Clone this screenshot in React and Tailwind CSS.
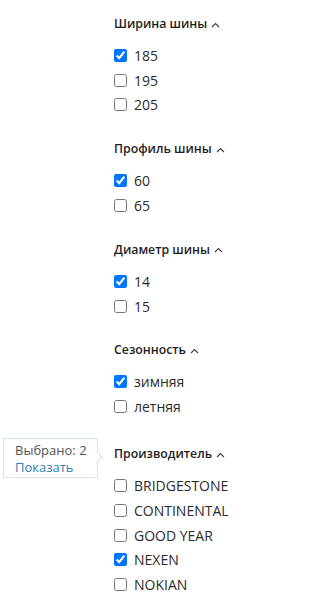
import React from 'react';

const groups = [
  { title: 'Ширина шины', items: [['185', true], ['195', false], ['205', false]] },
  { title: 'Профиль шины', items: [['60', true], ['65', false]] },
  { title: 'Диаметр шины', items: [['14', true], ['15', false]] },
  { title: 'Сезонность', items: [['зимняя', true], ['летняя', false]] },
  {
    title: 'Производитель',
    tip: true,
    items: [['BRIDGESTONE', false], ['CONTINENTAL', false], ['GOOD YEAR', false], ['NEXEN', true], ['NOKIAN', false]],
  },
];

const Chevron = () => (
  <svg width="9" height="6" viewBox="0 0 9 6" className="ml-[4px] mt-px">
    <path d="M1 5 L4.5 1.5 L8 5" fill="none" stroke="#444" strokeWidth="1.2" />
  </svg>
);

const Group = ({ title, items, tip }) => (
  <div className={tip ? 'mt-[3px] flex flex-col' : 'flex flex-col'}>
    <div className="relative flex items-center h-[24px] text-[12.3px] font-semibold text-[#1e1e1e]">
      {tip && (
        <div className="absolute right-full top-[-4px] mr-[16px] w-[95px] border border-[#d5e3ec] bg-white pl-[11px] pt-[3px] pb-px text-[13px] font-normal leading-[17px]">
          <div className="text-[#555]">Выбрано: 2</div>
          <div className="text-[#2e7fb4]">Показать</div>
          <div className="absolute right-[-4px] top-[14px] h-[8px] w-[8px] rotate-45 border-r border-t border-[#d5e3ec] bg-white" />
        </div>
      )}
      {title}
      <Chevron />
    </div>
    <div className="mt-[7px] flex flex-col">
      {items.map(([label, checked]) => (
        <label key={label} className="flex items-center h-[24.8px] text-[14px] text-[#2b2b2b]">
          <input type="checkbox" defaultChecked={checked} className="m-0 h-[13px] w-[13px]" />
          <span className="ml-[7px]">{label}</span>
        </label>
      ))}
    </div>
  </div>
);

export default function App() {
  return (
    <div className="h-[603px] w-[298px] bg-white pl-[114px] pt-[12px]" style={{ fontFamily: '"Open Sans", sans-serif' }}>
      <div className="flex flex-col gap-[20px]">
        {groups.map((g) => (
          <Group key={g.title} {...g} />
        ))}
      </div>
    </div>
  );
}
